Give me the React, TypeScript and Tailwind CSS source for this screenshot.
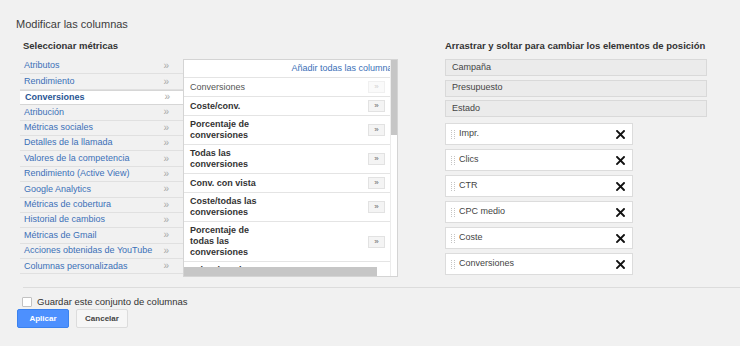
import React from 'react'

const categories = [
  'Atributos',
  'Rendimiento',
  'Conversiones',
  'Atribución',
  'Métricas sociales',
  'Detalles de la llamada',
  'Valores de la competencia',
  'Rendimiento (Active View)',
  'Google Analytics',
  'Métricas de cobertura',
  'Historial de cambios',
  'Métricas de Gmail',
  'Acciones obtenidas de YouTube',
  'Columnas personalizadas',
]

const metrics = [
  { label: 'Conversiones', added: true },
  { label: 'Coste/conv.' },
  { label: 'Porcentaje de conversiones' },
  { label: 'Todas las conversiones' },
  { label: 'Conv. con vista' },
  { label: 'Coste/todas las conversiones' },
  { label: 'Porcentaje de todas las conversiones' },
  { label: 'Valor de todas las conversiones' },
]

const fixedCols = ['Campaña', 'Presupuesto', 'Estado']
const movableCols = ['Impr.', 'Clics', 'CTR', 'CPC medio', 'Coste', 'Conversiones']

function DragHandle() {
  return (
    <svg width="4" height="9" viewBox="0 0 4 9" className="shrink-0">
      {[0, 2, 4, 6, 8].map((y) => (
        <g key={y}>
          <rect x="0" y={y} width="1" height="1" fill="#c4c4c4" />
          <rect x="3" y={y} width="1" height="1" fill="#c4c4c4" />
        </g>
      ))}
    </svg>
  )
}

function CloseIcon() {
  return (
    <svg width="9" height="9" viewBox="0 0 9 9" className="shrink-0">
      <path d="M1 1 L8 8 M8 1 L1 8" stroke="#111" strokeWidth="1.9" strokeLinecap="square" />
    </svg>
  )
}

export default function App() {
  return (
    <div
      className="w-[740px] h-[346px] overflow-hidden bg-[#f1f1f1] pt-[17px] text-[#333]"
      style={{ fontFamily: '"Liberation Sans", Arial, sans-serif' }}
    >
      <div className="pl-[16px] text-[11px] leading-[14px] text-[#3c3c3c]">Modificar las columnas</div>

      <div className="mt-[9px] flex">
        {/* left: metric picker */}
        <div className="ml-[20px] w-[378px]">
          <div className="pl-[3px] text-[9.5px] leading-[12px] font-bold text-[#333]">Seleccionar métricas</div>
          <div className="mt-[7px] flex">
            <div className="w-[163px]">
              {categories.map((c) => {
                const active = c === 'Conversiones'
                return (
                  <div
                    key={c}
                    className={
                      active
                        ? 'flex h-[15.4px] items-center justify-between border-y border-[#d6d6d6] bg-white pl-[5px] pr-[13px] text-[9px] font-bold text-[#2a5594]'
                        : 'flex h-[15.4px] items-center justify-between border-b border-[#e0e0e0] pl-[4px] pr-[14px] text-[9px] text-[#3b70b8]'
                    }
                  >
                    <span className="whitespace-nowrap">{c}</span>
                    <span className="text-[10px] leading-[10px] font-normal text-[#a8a8a8]">»</span>
                  </div>
                )
              })}
            </div>

            <div className="flex h-[218px] w-[215px] border border-[#d4d4d4] bg-white">
              <div className="flex min-w-0 flex-1 flex-col">
                <div className="min-h-0 flex-1 overflow-hidden">
                  <div className="w-[216px]">
                    <div className="flex h-[18px] items-center justify-end border-b border-[#e4e4e4] pr-[3px] text-[9px] text-[#3b70b8] whitespace-nowrap">
                      Añadir todas las columnas
                    </div>
                    {metrics.map((m) => (
                      <div
                        key={m.label}
                        className="flex items-center justify-between border-b border-[#e4e4e4] py-[3px] pl-[6px] pr-[15px]"
                      >
                        <span
                          className={
                            m.added
                              ? 'w-[76px] text-[9px] leading-[11px] text-[#555] whitespace-nowrap'
                              : 'w-[76px] text-[9px] leading-[11px] font-bold text-[#333]'
                          }
                        >
                          {m.label}
                        </span>
                        <span
                          className={
                            m.added
                              ? 'flex h-[12px] w-[17px] items-center justify-center border border-[#f0f0f0] bg-[#fafafa] text-[8px] text-[#d0d0d0]'
                              : 'flex h-[12px] w-[17px] items-center justify-center border border-[#e2e2e2] bg-[#f4f4f4] text-[8px] text-[#666]'
                          }
                        >
                          »
                        </span>
                      </div>
                    ))}
                  </div>
                </div>
                <div className="flex h-[9px] shrink-0 bg-white">
                  <div className="h-full w-[193px] bg-[#c6c6c6]" />
                </div>
              </div>
              <div className="w-[7px] shrink-0 border-l border-[#ececec] bg-white">
                <div className="h-[75px] bg-[#c6c6c6]" />
              </div>
            </div>
          </div>
        </div>

        {/* right: order */}
        <div className="ml-[47px] w-[262px]">
          <div className="text-[9.5px] leading-[12px] font-bold text-[#333] whitespace-nowrap">
            Arrastrar y soltar para cambiar los elementos de posición
          </div>
          <div className="mt-[7px] flex flex-col gap-[3.5px]">
            {fixedCols.map((c) => (
              <div
                key={c}
                className="flex h-[17px] items-center border border-[#d9d9d9] bg-[#ebebeb] pl-[6px] text-[9px] text-[#444]"
              >
                {c}
              </div>
            ))}
          </div>
          <div className="mt-[6px] flex flex-col gap-[4px]">
            {movableCols.map((c) => (
              <div
                key={c}
                className="flex h-[22px] w-[188px] items-center border border-[#dcdcdc] bg-white pl-[5px] pr-[7px] text-[9px] text-[#444]"
              >
                <DragHandle />
                <span className="ml-[4px] flex-1">{c}</span>
                <CloseIcon />
              </div>
            ))}
          </div>
        </div>
      </div>

      <div className="ml-[23px] mt-[10px] border-t border-[#dcdcdc]" />

      <div className="mt-[8px] flex items-center pl-[22px]">
        <span className="h-[10px] w-[10px] rounded-[1px] border border-[#c2c2c2] bg-white" />
        <span className="ml-[5px] text-[9.5px] leading-[12px] text-[#333]">Guardar este conjunto de columnas</span>
      </div>

      <div className="mt-[1px] flex gap-[7px] pl-[17px]">
        <button className="flex h-[19px] w-[52px] items-center justify-center rounded-[2px] border border-[#3b82ee] bg-[#4d90fe] text-[8px] font-bold text-white">
          Aplicar
        </button>
        <button className="flex h-[19px] w-[52px] items-center justify-center rounded-[2px] border border-[#dcdcdc] bg-[#f6f6f6] text-[8px] font-bold text-[#444]">
          Cancelar
        </button>
      </div>
    </div>
  )
}
